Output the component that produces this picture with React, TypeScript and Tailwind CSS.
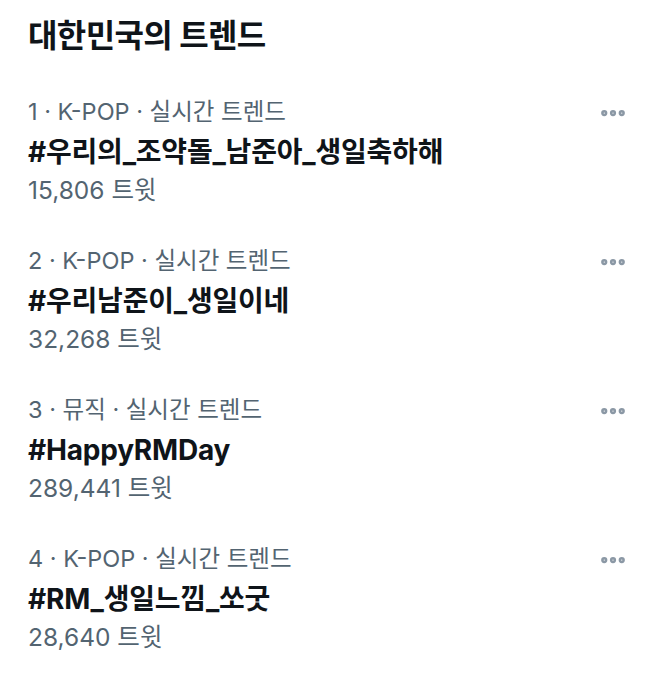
import { MoreHorizontal } from "lucide-react";

const trends = [
  { rank: 1, category: "K-POP", name: "#우리의_조약돌_남준아_생일축하해", count: "15,806" },
  { rank: 2, category: "K-POP", name: "#우리남준이_생일이네", count: "32,268" },
  { rank: 3, category: "뮤직", name: "#HappyRMDay", count: "289,441" },
  { rank: 4, category: "K-POP", name: "#RM_생일느낌_쏘굿", count: "28,640" },
];

export default function App() {
  return (
    <div
      className="w-[659px] h-[680px] bg-white overflow-hidden"
      style={{ fontFamily: 'Inter, "Noto Sans CJK KR", sans-serif' }}
    >
      {/* Header */}
      <h1 className="px-[28px] pt-[14px] text-[32px] font-bold text-[#0f1419] leading-[44px] tracking-[-0.6px]">
        대한민국의 트렌드
      </h1>

      {/* Trend list */}
      <ul className="mt-[36px] flex flex-col gap-[37px]">
        {trends.map((t) => (
          <li key={t.rank} className="flex justify-between px-[28px]">
            <div className="flex flex-col">
              <span className="text-[23.5px] text-[#536471] leading-[36px]">
                {t.rank} · {t.category} · 실시간 트렌드
              </span>
              <span className="text-[28px] font-bold text-[#0f1419] leading-[44px] tracking-[-0.2px]">
                {t.name}
              </span>
              <span className="text-[24.5px] text-[#536471] leading-[32px]">
                {t.count} 트윗
              </span>
            </div>
            <MoreHorizontal className="w-[30px] h-[30px] text-[#8b98a5] mt-[4px] mr-[3px]" strokeWidth={3} />
          </li>
        ))}
      </ul>
    </div>
  );
}
